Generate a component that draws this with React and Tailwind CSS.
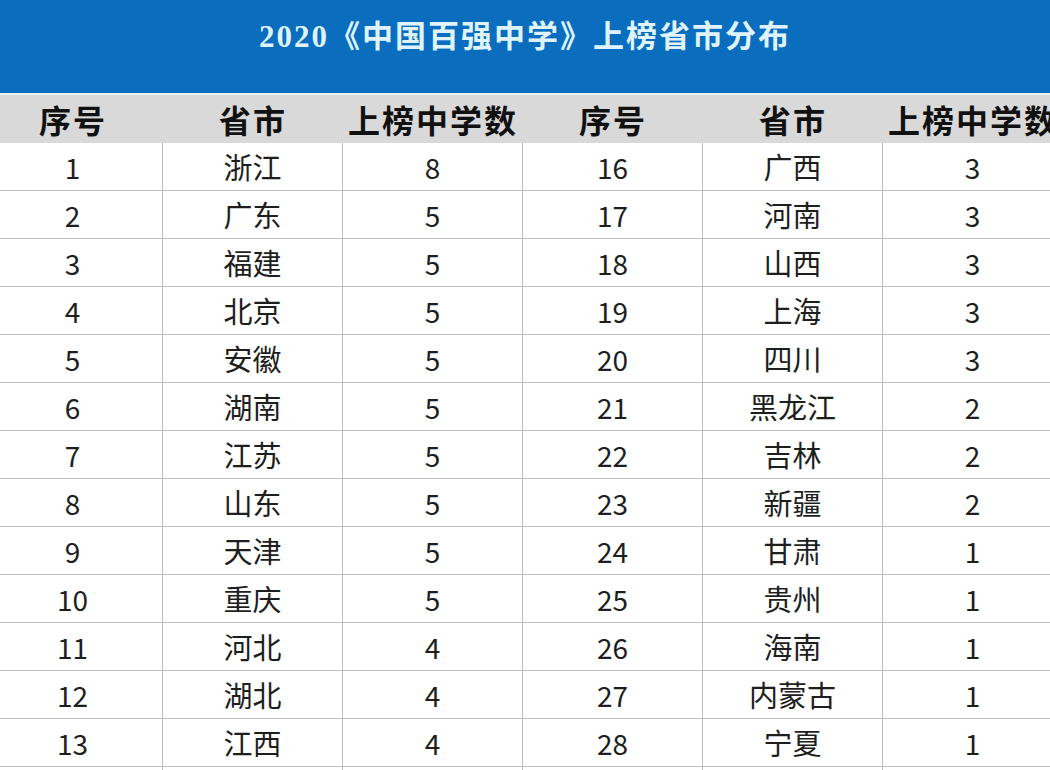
import React from 'react';

const LEFT = [
  [1, '浙江', 8], [2, '广东', 5], [3, '福建', 5], [4, '北京', 5], [5, '安徽', 5],
  [6, '湖南', 5], [7, '江苏', 5], [8, '山东', 5], [9, '天津', 5], [10, '重庆', 5],
  [11, '河北', 4], [12, '湖北', 4], [13, '江西', 4], ['', '', ''],
];
const RIGHT = [
  [16, '广西', 3], [17, '河南', 3], [18, '山西', 3], [19, '上海', 3], [20, '四川', 3],
  [21, '黑龙江', 2], [22, '吉林', 2], [23, '新疆', 2], [24, '甘肃', 1], [25, '贵州', 1],
  [26, '海南', 1], [27, '内蒙古', 1], [28, '宁夏', 1], ['', '', ''],
];

const cell = 'h-[48px] flex items-center justify-center border-b border-r border-[#bdbdbd] text-[#1e1e1e]';

export default function App() {
  return (
    <div
      className="w-[1050px] h-[770px] overflow-hidden bg-white"
      style={{ fontFamily: '"Noto Sans CJK SC", sans-serif' }}
    >
      {/* 标题栏 */}
      <div className="h-[93px] bg-[#0a6dbe] flex items-center justify-center pb-[18px]">
        <h1
          className="text-[31px] font-bold text-[#dff3ff] tracking-[2px]"
          style={{ fontFamily: '"Liberation Serif", "Noto Sans CJK SC", serif' }}
        >
          2020《中国百强中学》上榜省市分布
        </h1>
      </div>
      <div className="h-[2px] bg-[#eef3f8]" />

      <div className="ml-[-17px] w-[1080px] grid grid-cols-[180px_180px_180px_180px_180px_180px]">
        {/* 表头 */}
        {['序号', '省市', '上榜中学数', '序号', '省市', '上榜中学数'].map((h, i) => (
          <div
            key={i}
            className="h-[48px] bg-[#d9d9d9] flex items-center justify-center text-[32px] font-bold text-[#111] tracking-[2px] whitespace-nowrap"
          >
            {h}
          </div>
        ))}

        {/* 数据 */}
        {LEFT.map((l, r) => {
          const rr = RIGHT[r];
          return (
            <React.Fragment key={r}>
              <div className={`${cell} text-[28px]`}>{l[0]}</div>
              <div className={`${cell} text-[29px]`}>{l[1]}</div>
              <div className={`${cell} text-[28px]`}>{l[2]}</div>
              <div className={`${cell} text-[28px]`}>{rr[0]}</div>
              <div className={`${cell} text-[29px]`}>{rr[1]}</div>
              <div className={`${cell} text-[28px]`}>{rr[2]}</div>
            </React.Fragment>
          );
        })}
      </div>
    </div>
  );
}
